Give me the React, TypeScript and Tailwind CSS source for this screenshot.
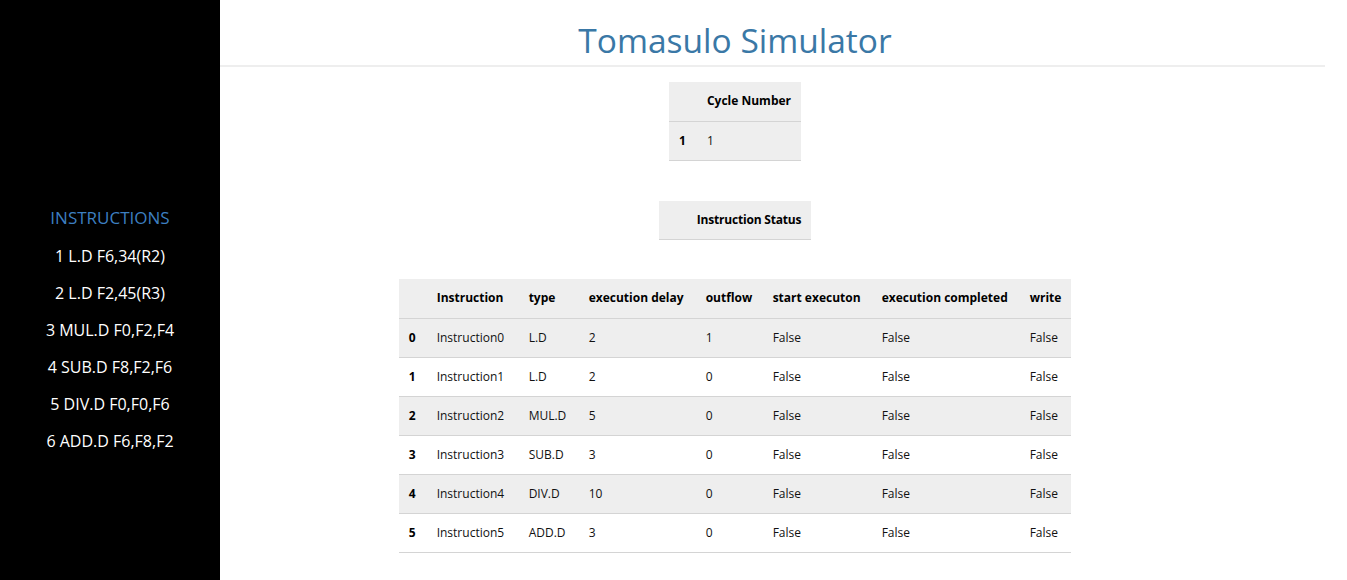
const instructions = [
  '1 L.D F6,34(R2)',
  '2 L.D F2,45(R3)',
  '3 MUL.D F0,F2,F4',
  '4 SUB.D F8,F2,F6',
  '5 DIV.D F0,F0,F6',
  '6 ADD.D F6,F8,F2',
];

const rows = [
  { name: 'Instruction0', type: 'L.D', delay: '2', outflow: '1' },
  { name: 'Instruction1', type: 'L.D', delay: '2', outflow: '0' },
  { name: 'Instruction2', type: 'MUL.D', delay: '5', outflow: '0' },
  { name: 'Instruction3', type: 'SUB.D', delay: '3', outflow: '0' },
  { name: 'Instruction4', type: 'DIV.D', delay: '10', outflow: '0' },
  { name: 'Instruction5', type: 'ADD.D', delay: '3', outflow: '0' },
];

const font = { fontFamily: '"Open Sans", "Noto Sans", sans-serif' };

const App = () => {
  return (
    <div className="flex min-h-[580px] bg-white" style={font}>
      {/* Sidebar */}
      <aside className="w-[220px] shrink-0 bg-black flex flex-col items-center pt-[205px]">
        <h2 className="text-[17px] leading-[26px] text-[#3d7fc0] mb-[7px]">INSTRUCTIONS</h2>
        <ul className="flex flex-col items-center">
          {instructions.map((ins) => (
            <li key={ins} className="text-[16px] leading-[37px] text-white">
              {ins}
            </li>
          ))}
        </ul>
      </aside>

      {/* Main */}
      <main className="flex-1">
        <div className="w-[1105px]">
          <h1 className="w-[1030px] text-center text-[33.5px] leading-[48px] pt-[16px] pb-[1px] text-[#3a78a6]">
            Tomasulo Simulator
          </h1>
          <div className="h-[2px] bg-[#eeeeee]" />
        </div>

        <div className="w-[1030px] flex flex-col items-center text-[12px] text-[#111]">
          {/* Cycle number */}
          <table className="mt-[15px] border-collapse">
            <thead>
              <tr className="bg-[#eeeeee] border-b border-[#d4d4d4] h-[39px]">
                <th className="px-[10px] w-[28px]"></th>
                <th className="px-[10px] text-left font-bold text-black">Cycle Number</th>
              </tr>
            </thead>
            <tbody>
              <tr className="bg-[#eeeeee] border-b border-[#d4d4d4] h-[39px]">
                <td className="px-[10px] font-bold text-black">1</td>
                <td className="px-[10px]">1</td>
              </tr>
            </tbody>
          </table>

          {/* Instruction status */}
          <table className="mt-[40px] border-collapse">
            <thead>
              <tr className="bg-[#eeeeee] border-b border-[#d4d4d4] h-[39px]">
                <th className="px-[10px] w-[28px]"></th>
                <th className="px-[10px] text-left font-bold text-black tracking-[-0.2px]">
                  Instruction Status
                </th>
              </tr>
            </thead>
          </table>

          {/* Instruction table */}
          <table className="mt-[39px] border-collapse">
            <thead>
              <tr className="bg-[#eeeeee] border-b border-[#d4d4d4] h-[39px] text-left whitespace-nowrap text-black">
                <th className="px-[10px] w-[28px]"></th>
                <th className="px-[10px] w-[92px] font-bold">Instruction</th>
                <th className="px-[10px] w-[60px] font-bold">type</th>
                <th className="px-[10px] w-[117px] font-bold">execution delay</th>
                <th className="px-[10px] w-[67px] font-bold">outflow</th>
                <th className="px-[10px] w-[109px] font-bold">start executon</th>
                <th className="px-[10px] w-[148px] font-bold">execution completed</th>
                <th className="px-[10px] w-[51px] font-bold">write</th>
              </tr>
            </thead>
            <tbody>
              {rows.map((r, i) => (
                <tr
                  key={r.name}
                  className={`h-[39px] border-b border-[#d4d4d4] whitespace-nowrap ${
                    i % 2 === 0 ? 'bg-[#eeeeee]' : 'bg-white'
                  }`}
                >
                  <td className="px-[10px] font-bold text-black">{i}</td>
                  <td className="px-[10px]">{r.name}</td>
                  <td className="px-[10px]">{r.type}</td>
                  <td className="px-[10px]">{r.delay}</td>
                  <td className="px-[10px]">{r.outflow}</td>
                  <td className="px-[10px]">False</td>
                  <td className="px-[10px]">False</td>
                  <td className="px-[10px]">False</td>
                </tr>
              ))}
            </tbody>
          </table>
        </div>
      </main>
    </div>
  );
};

export default App;
